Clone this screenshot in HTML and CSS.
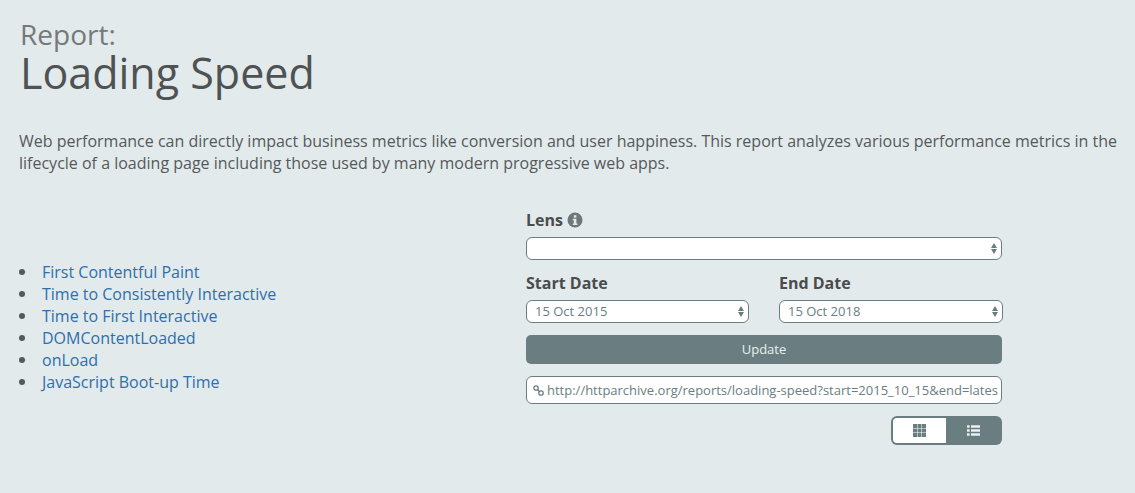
FILE: index.html
```html
<!DOCTYPE html>
<html lang="en">
<head>
<meta charset="utf-8">
<title>Report: Loading Speed</title>
<link rel="stylesheet" href="styles.css">
</head>
<body>
<main class="page">
  <header class="title">
    <div class="eyebrow">Report:</div>
    <h1>Loading Speed</h1>
  </header>
  <p class="intro">Web performance can directly impact business metrics like conversion and user happiness. This report analyzes various performance metrics in the lifecycle of a loading page including those used by many modern progressive web apps.</p>
  <div class="columns">
    <ul class="metrics">
      <li><a href="#">First Contentful Paint</a></li>
      <li><a href="#">Time to Consistently Interactive</a></li>
      <li><a href="#">Time to First Interactive</a></li>
      <li><a href="#">DOMContentLoaded</a></li>
      <li><a href="#">onLoad</a></li>
      <li><a href="#">JavaScript Boot-up Time</a></li>
    </ul>
    <form class="filters">
      <div class="label lens-label">Lens
        <svg class="info" viewBox="0 0 16 16" width="16" height="16" aria-hidden="true"><circle cx="8" cy="8" r="7.5" fill="#6f7778"/><rect x="6.8" y="3.2" width="2.6" height="2.4" fill="#e2eaec"/><path d="M5.8 6.8h3.6v4.6h1v1.5H5.8v-1.5h1V8.300H5.800z" fill="#e2eaec"/></svg>
      </div>
      <div class="select lens-select"><select aria-label="Lens"><option></option></select></div>
      <div class="dates">
        <div class="date start">
          <div class="label">Start Date</div>
          <div class="select"><select aria-label="Start Date"><option>15 Oct 2015</option></select></div>
        </div>
        <div class="date end">
          <div class="label">End Date</div>
          <div class="select"><select aria-label="End Date"><option>15 Oct 2018</option></select></div>
        </div>
      </div>
      <button type="button" class="update">Update</button>
      <div class="permalink">
        <svg class="link-icon" viewBox="0 0 11 11" width="11" height="11" aria-hidden="true"><g fill="none" stroke="#6a7e82" stroke-width="1.300"><circle cx="3" cy="3" r="2.200"/><circle cx="8" cy="8" r="2.200"/><path d="M4.400 4.400l2.200 2.200"/></g></svg>
        <input class="url" type="text" readonly aria-label="Report link" value="http://httparchive.org/reports/loading-speed?start=2015_10_15&amp;end=latest&amp;view=list">
      </div>
      <div class="view-row">
        <div class="toggle">
          <span class="seg active">
            <svg viewBox="0 0 13 13" width="13" height="13" aria-hidden="true"><g fill="#6a7e82"><rect x="0" y="0" width="4" height="4"/><rect x="4.500" y="0" width="4" height="4"/><rect x="9" y="0" width="4" height="4"/><rect x="0" y="4.500" width="4" height="4"/><rect x="4.500" y="4.500" width="4" height="4"/><rect x="9" y="4.500" width="4" height="4"/><rect x="0" y="9" width="4" height="4"/><rect x="4.500" y="9" width="4" height="4"/><rect x="9" y="9" width="4" height="4"/></g></svg>
          </span>
          <span class="seg">
            <svg viewBox="0 0 13 11" width="13" height="11" aria-hidden="true"><g fill="#eef3f4"><rect x="0" y="0.300" width="2.600" height="2.400"/><rect x="4" y="0.300" width="9" height="2.400"/><rect x="0" y="4.300" width="2.600" height="2.400"/><rect x="4" y="4.300" width="9" height="2.400"/><rect x="0" y="8.300" width="2.600" height="2.400"/><rect x="4" y="8.300" width="9" height="2.400"/></g></svg>
          </span>
        </div>
      </div>
    </form>
  </div>
</main>
</body>
</html>
```
FILE: styles.css
```css
* { box-sizing: border-box; }
html, body { margin: 0; height: 100%; overflow: hidden; }
body {
  background: #e2eaec;
  color: #4a4c4d;
  font-family: "Open Sans", "Liberation Sans", sans-serif;
  font-size: 16px;
}
.page { padding: 16px 0 0 19px; width: 1135px; }
.title { padding-left: 1px; }
.eyebrow { margin-bottom: 1px; font-size: 28px; font-weight: 400; line-height: 36px; color: #75797a; }
h1 { margin: 0; font-size: 43px; font-weight: 400; line-height: 40px; color: #4f5253; }
.intro { margin: 37px 0 0; width: 1105px; line-height: 22px; color: #56595a; }
.columns { display: flex; margin-top: 30px; }
.metrics { margin: 57px 0 0; padding: 0; width: 507px; list-style: none; line-height: 22px; }
.metrics li { display: flex; align-items: center; gap: 17px; }
.metrics li::before {
  content: "";
  width: 6px;
  height: 6px;
  border-radius: 50%;
  background: #55585a;
}
.metrics a { color: #2f6fad; text-decoration: none; }
.filters { width: 477px; }
.label { font-weight: 700; line-height: 22px; color: #4a4c4d; }
.lens-label { display: flex; align-items: center; gap: 4px; height: 33px; padding-bottom: 2px; }
.info { display: block; }
.select {
  position: relative;
  height: 23px;
  border: 1px solid #6a7e82;
  border-radius: 6px;
  background: #fff;
}
.select select {
  display: block;
  width: 100%;
  height: 100%;
  margin: 0;
  padding: 0 16px 0 8px;
  border: 0;
  outline: 0;
  background: transparent;
  appearance: none;
  font: 13px/21px "Open Sans", "Liberation Sans", sans-serif;
  color: #6a7e82;
}
.select::before, .select::after {
  content: "";
  position: absolute;
  right: 4px;
  border-left: 3px solid transparent;
  border-right: 3px solid transparent;
  pointer-events: none;
}
.select::before { top: 5px; border-bottom: 5px solid #6a7e82; }
.select::after { bottom: 5px; border-top: 5px solid #6a7e82; }
.lens-select { width: 476px; }
.dates { display: flex; gap: 30px; margin-top: 12px; }
.date { width: 223px; }
.date .label { height: 28px; }
.date.end { width: 224px; }
.update {
  display: block;
  width: 476px;
  height: 29px;
  margin-top: 12px;
  padding: 0 0 1px;
  border: 0;
  border-radius: 5px;
  background: #6a7e82;
  color: #e8eeef;
  font: 13px/28px "Open Sans", "Liberation Sans", sans-serif;
}
.permalink {
  display: flex;
  align-items: center;
  gap: 3px;
  width: 476px;
  height: 28px;
  margin-top: 12px;
  padding: 0 3px 0 6px;
  border: 1px solid #6a7e82;
  border-radius: 6px;
  background: #fff;
}
.link-icon { flex: none; }
.url {
  flex: 1;
  min-width: 0;
  padding: 0;
  border: 0;
  outline: 0;
  background: transparent;
  font: 13px "Open Sans", "Liberation Sans", sans-serif;
  color: #6a7e82;
}
.view-row { display: flex; justify-content: flex-end; width: 476px; margin-top: 12px; }
.toggle {
  display: flex;
  width: 111px;
  height: 29px;
  padding: 2px;
  border-radius: 6px;
  background: #6a7e82;
}
.seg { display: flex; flex: 1; align-items: center; justify-content: center; }
.seg.active { background: #fff; border-radius: 4px 0 0 4px; flex: none; width: 53px; }
.seg svg { display: block; }
```
